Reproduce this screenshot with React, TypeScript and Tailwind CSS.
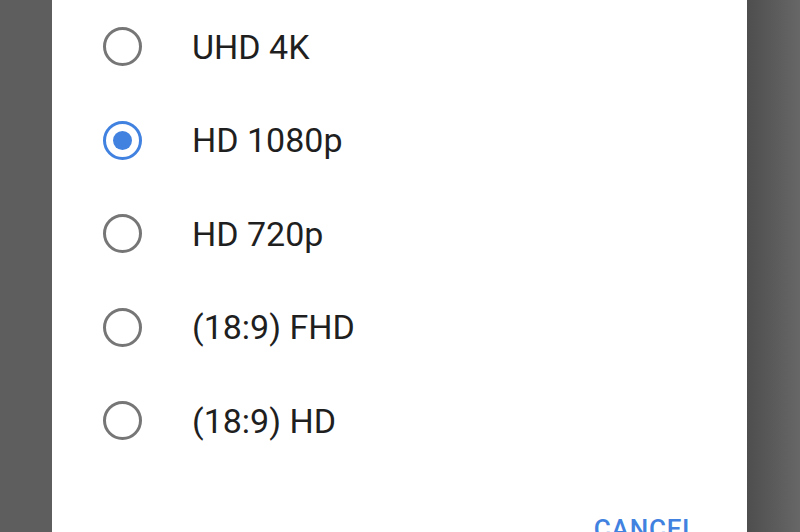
import React, { useState } from 'react';

const options = ['UHD 4K', 'HD 1080p', 'HD 720p', '(18:9) FHD', '(18:9) HD'];

const Radio: React.FC<{ checked: boolean }> = ({ checked }) => (
    <span
        className={`flex items-center justify-center w-[39px] h-[39px] rounded-full border-[3.5px] shrink-0 ${
            checked ? 'border-[#4182e0]' : 'border-[#767676]'
        }`}
    >
        {checked && <span className="w-[19px] h-[19px] rounded-full bg-[#4182e0]" />}
    </span>
);

export default function App() {
    const [selected, setSelected] = useState(1);

    return (
        <div className="flex w-[800px] h-[532px] overflow-hidden bg-[#5e5e5e] font-['Roboto',sans-serif]">
            <div className="ml-[52px] w-[695px] h-full bg-white flex flex-col">
                {options.map((label, i) => (
                    <button
                        key={label}
                        type="button"
                        onClick={() => setSelected(i)}
                        className="flex items-center h-[93.5px] pl-[51px] gap-[50px] text-left shrink-0"
                    >
                        <Radio checked={selected === i} />
                        <span className="text-[34px] text-[#1f1f1f] leading-none">{label}</span>
                    </button>
                ))}
                <div className="flex justify-end pr-[50px] pt-[48px]">
                    <span className="text-[26px] font-medium tracking-[0.8px] text-[#4182e0] leading-none">CANCEL</span>
                </div>
            </div>
            <div className="flex-1 h-full bg-gradient-to-r from-[#4e4e4e] to-[#676767]" />
        </div>
    );
}
